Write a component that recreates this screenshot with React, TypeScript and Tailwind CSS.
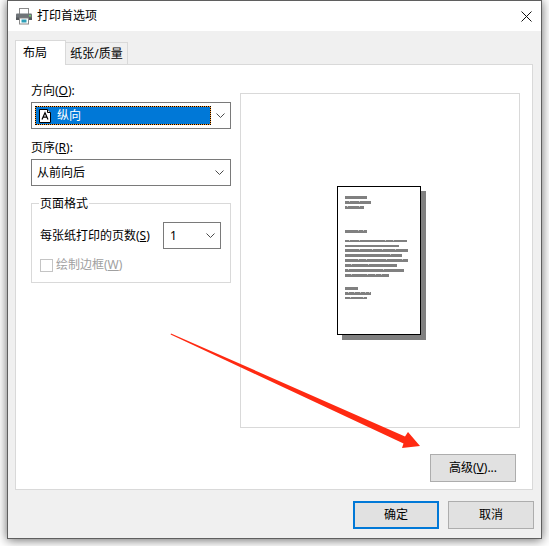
const font = "font-['Noto_Sans','Noto_Sans_CJK_SC',sans-serif]"

function Chevron() {
  return (
    <svg width="9" height="5" viewBox="0 0 9 5" fill="none" className="shrink-0">
      <path d="M0.5 0.5 L4.5 4.5 L8.5 0.5" stroke="#4a4a4a" strokeWidth="1" />
    </svg>
  )
}

function PrinterIcon() {
  return (
    <svg width="18" height="18" viewBox="0 0 18 18" className="shrink-0">
      <rect x="4.5" y="1.5" width="9" height="6" fill="#fff" stroke="#8a8a8a" />
      <rect x="1" y="6.5" width="16" height="6.5" rx="1" fill="#6f7478" />
      <rect x="1" y="10.5" width="16" height="2.5" fill="#55595d" />
      <rect x="14" y="8" width="2" height="1.5" fill="#6fd06f" />
      <rect x="4.5" y="11" width="9" height="6" fill="#fff" stroke="#8a8a8a" />
      <rect x="6.5" y="12.5" width="5" height="3" fill="#2f9fb8" />
    </svg>
  )
}

function PortraitIcon() {
  return (
    <svg width="16" height="16" viewBox="0 0 16 16" className="shrink-0">
      <path d="M2.5 1.5 H10.5 L13.5 4.5 V14.5 H2.5 Z" fill="#fff" stroke="#000" />
      <path d="M10.5 1.5 V4.5 H13.5" fill="#ddd" stroke="#000" />
      <path d="M5 11.5 L8 4.8 L11 11.5 M6.2 9.2 H9.8" fill="none" stroke="#000" strokeWidth="1.2" />
    </svg>
  )
}

const bars = [
  [10, 22, 3], [15, 26, 3], [20, 19, 3],
  [44, 22, 3],
  [54, 62, 2], [59, 54, 2], [63, 63, 3], [68, 57, 3], [73, 63, 3], [78, 52, 3], [83, 59, 3], [88, 44, 3],
  [101, 13, 3], [106, 26, 3], [111, 22, 2],
]

const specks = [
  [12, 15], [22, 15], [10, 20], [22, 20], [21, 44], [26, 44], [12, 54], [22, 54], [48, 54], [56, 54],
  [22, 63], [35, 63], [45, 63], [58, 63], [53, 68], [21, 73], [29, 73], [49, 73], [65, 73], [14, 78],
  [31, 78], [11, 83], [46, 83], [14, 88], [30, 88], [38, 88], [44, 88], [11, 106], [17, 106], [23, 106],
  [28, 106], [32, 106], [13, 111], [26, 111],
]

function PaperPreview() {
  return (
    <svg width="90" height="155" viewBox="0 0 90 155">
      <rect x="5" y="5" width="84" height="149" fill="#808080" />
      <rect x="0.5" y="0.5" width="83" height="148" fill="#fff" stroke="#000" />
      {bars.map(([y, w, h], i) => (
        <rect key={i} x="8" y={y} width={w} height={h} fill="#808080" />
      ))}
      {specks.map(([x, y], i) => (
        <rect key={i} x={x} y={y} width="1" height="1" fill="#c8c8c8" />
      ))}
    </svg>
  )
}

function Btn({ children, primary }: { children: React.ReactNode; primary?: boolean }) {
  return (
    <div
      className={
        primary
          ? "flex h-[28px] w-[86px] items-center justify-center border-2 border-[#0078d7] bg-[#e1e1e1] text-[12px] text-black"
          : "flex h-[28px] w-[86px] items-center justify-center border border-[#adadad] bg-[#e1e1e1] text-[12px] text-black"
      }
    >
      {children}
    </div>
  )
}

export default function App() {
  return (
    <div className={`relative h-[546px] w-[549px] overflow-hidden bg-white ${font}`}>
      <div className="ml-[7px] flex h-[539px] w-[535px] flex-col border border-[#5f5f5f] bg-[#f0f0f0] shadow-[0_1px_10px_rgba(0,0,0,0.6)]">
        <div className="flex h-[30px] shrink-0 items-center bg-white pl-[7px] pr-[9px]">
          <PrinterIcon />
          <span className="ml-[4px] text-[12px] text-black">打印首选项</span>
          <svg width="11" height="11" viewBox="0 0 11 11" className="ml-auto">
            <path d="M0.5 0.5 L10.5 10.5 M10.5 0.5 L0.5 10.5" stroke="#111" strokeWidth="1" />
          </svg>
        </div>

        <div className="flex-1 px-[7px] pt-[9px]">
          <div className="flex h-[24px] items-end">
            <div className="relative z-10 -mb-px flex h-[25px] w-[51px] items-center border border-b-0 border-[#d9d9d9] bg-white pl-[7px] text-[12px] text-black">
              布局
            </div>
            <div className="flex h-[22px] w-[62px] items-center justify-center border border-b-0 border-l-0 border-[#d9d9d9] bg-[#f0f0f0] text-[12px] text-black">
              纸张/质量
            </div>
          </div>

          <div className="flex h-[426px] w-[518px] gap-[9px] border border-[#d9d9d9] bg-white pl-[15px] pr-[12px]">
            <div className="w-[200px] shrink-0 pt-[15px]">
              <div className="flex h-[22px] items-center text-[12px] text-black">
                <span>方向(<span className="underline">O</span>):</span>
              </div>
              <div className="flex h-[27px] items-center border border-[#7a7a7a] bg-white p-[3px]">
                <div className="h-[19px] w-[176px] bg-[#ff9b2e]">
                  <div className="flex h-[19px] items-center gap-[4px] border border-dotted border-black bg-[#0078d7] bg-clip-padding pl-[1px] text-[12px] text-white">
                    <PortraitIcon />
                    纵向
                  </div>
                </div>
                <div className="flex flex-1 justify-center pl-[3px]">
                  <Chevron />
                </div>
              </div>

              <div className="mt-[8px] flex h-[22px] items-center text-[12px] text-black">
                <span>页序(<span className="underline">R</span>):</span>
              </div>
              <div className="flex h-[27px] items-center justify-between border border-[#7a7a7a] bg-white pl-[5px] pr-[3px] text-[12px] text-black">
                从前向后
                <div className="flex w-[16px] justify-center">
                  <Chevron />
                </div>
              </div>

              <div className="relative mt-[17px] h-[80px] border border-[#d9d9d9] px-[8px] pt-[18px]">
                <span className="absolute left-[7px] top-[-9px] bg-white px-[1px] text-[12px] leading-[17px] text-black">
                  页面格式
                </span>
                <div className="flex items-center">
                  <span className="w-[123px] whitespace-nowrap text-[12px] text-black">
                    每张纸打印的页数(<span className="underline">S</span>)
                  </span>
                  <div className="flex h-[27px] w-[58px] items-center justify-between border border-[#7a7a7a] pl-[6px] pr-[2px] text-[12px] text-black">
                    1
                    <div className="flex w-[16px] justify-center">
                      <Chevron />
                    </div>
                  </div>
                </div>
                <div className="mt-[7px] flex items-center gap-[3px]">
                  <div className="h-[13px] w-[13px] border border-[#c4c4c4] bg-white" />
                  <span className="text-[12px] text-[#a0a0a0]">
                    绘制边框(<span className="underline">W</span>)
                  </span>
                </div>
              </div>
            </div>

            <div className="flex w-[280px] flex-col pt-[28px]">
              <div className="flex h-[335px] items-start justify-center border border-[#d9d9d9] pl-[3px] pt-[92px]">
                <PaperPreview />
              </div>
              <div className="mt-[26px] flex justify-end pr-[4px]">
                <Btn>高级(<span className="underline">V</span>)...</Btn>
              </div>
            </div>
          </div>

          <div className="mt-[11px] flex justify-end gap-[9px]">
            <Btn primary>确定</Btn>
            <Btn>取消</Btn>
          </div>
        </div>
      </div>

      <svg width="549" height="546" viewBox="0 0 549 546" className="pointer-events-none absolute left-0 top-0">
        <polygon points="171,333.4 405,436.5 408,432 420,446 402,448 403.5,443.5 170.6,334.6" fill="#ff2a12" />
      </svg>
    </div>
  )
}
